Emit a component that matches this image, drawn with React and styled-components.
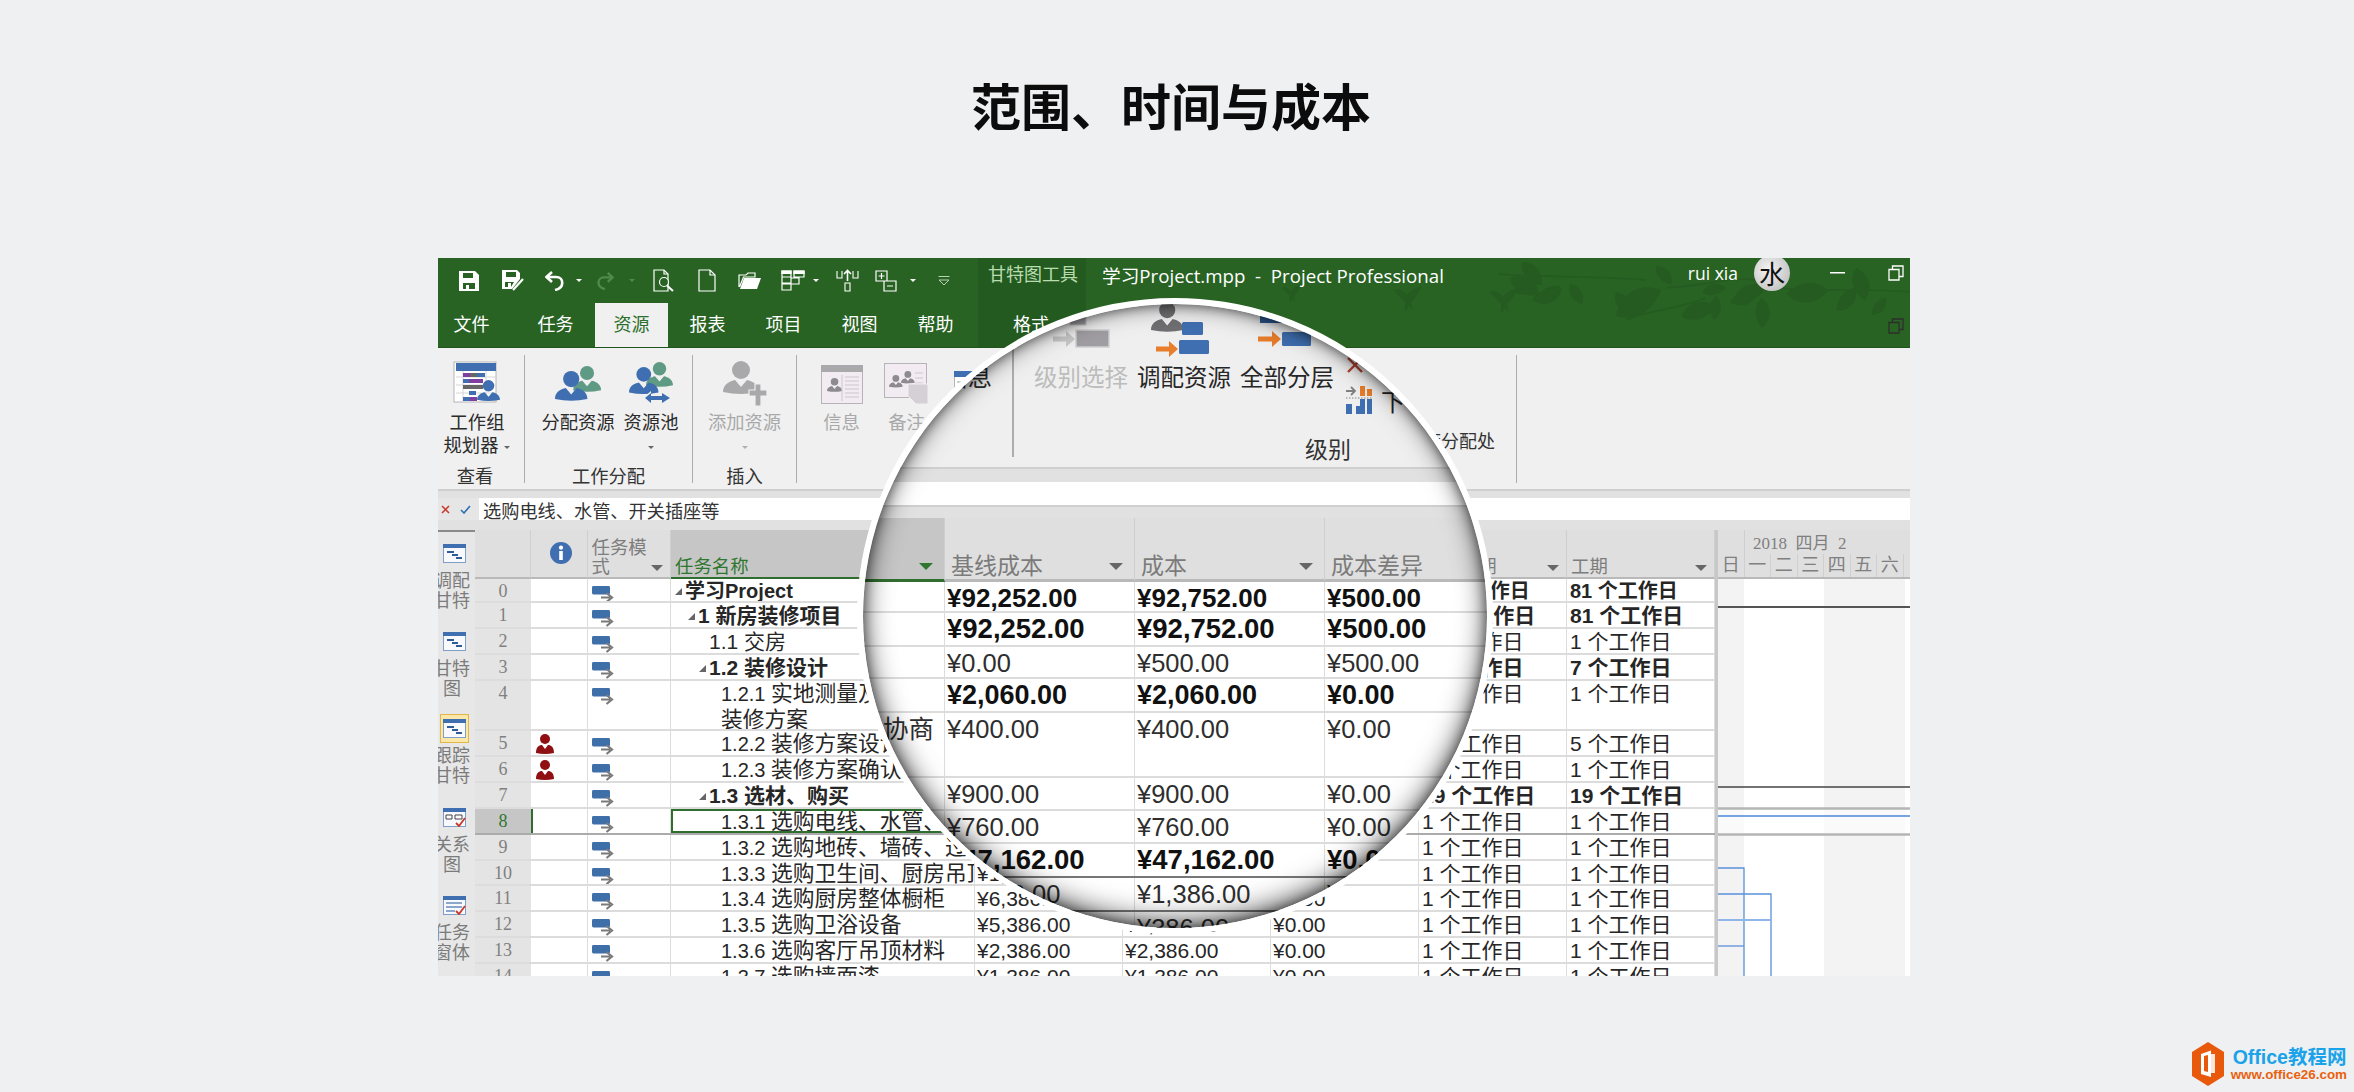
import React from "react";
import styled, { createGlobalStyle } from "styled-components";

const GREEN = "#286323";
const CJK = `"Liberation Sans", "Noto Sans CJK SC", sans-serif`;
const SERIF = `"Liberation Serif", "Noto Sans CJK SC", serif`;
const UI = `"Open Sans", "Noto Sans CJK SC", sans-serif`;
const COLS = "56px 56.5px 83.5px 304px 148px 148px 148px 148px 148px";

const Global = createGlobalStyle`
  html, body { margin: 0; padding: 0; background: #eff0f2; }
  * { box-sizing: border-box; }
`;

////PAGE
const Page = styled.div`
  position: relative;
  width: 2354px;
  height: 1092px;
  overflow: hidden;
  background: #eff0f2;
  font-family: ${CJK};
`;
const Title = styled.h1`
  margin: 0 0 50px;
  height: 208px;
  padding-right: 12px;
  line-height: 208px;
  text-align: center;
  font-family: "Noto Sans CJK SC", sans-serif;
  font-size: 50px;
  font-weight: 700;
  color: #0c0c0c;
`;
const Win = styled.div`
  position: relative;
  width: 1472px;
  height: 718px;
  margin-left: 438px;
  overflow: hidden;
  background: #fff;
`;

////TITLE BAR + TABS
const Head = styled.header`
  position: relative;
  display: grid;
  grid-template-columns: 540px 108px 1fr;
  height: 90px;
  background: ${GREEN};
  border-bottom: 1px solid #1f551c;
  overflow: hidden;
`;
const HeadArt = styled.svg`
  position: absolute;
  left: 648px;
  top: 0;
`;
const HeadCol = styled.div`
  position: relative;
  display: flex;
  flex-direction: column;
  background: ${(p) => (p.$dark ? "#235a1f" : "transparent")};
`;
const Qat = styled.div`
  display: flex;
  align-items: center;
  height: 45px;
  padding-left: 10px;
`;
const QatBtn = styled.div`
  display: flex;
  align-items: center;
  justify-content: center;
  width: ${(p) => p.$w}px;
  flex: none;
`;
const TabRow = styled.nav`
  display: flex;
  gap: 3px;
  height: 45px;
`;
const Tab = styled.div`
  width: ${(p) => (p.$file ? 78 : 73)}px;
  padding-right: ${(p) => (p.$file ? 11 : 0)}px;
  line-height: 44px;
  text-align: center;
  font-size: 18px;
  color: ${(p) => (p.$active ? "#2c6f2a" : "#fff")};
  background: ${(p) => (p.$active ? "#f0f0f0" : "transparent")};
`;
const ToolsTitle = styled.div`
  height: 45px;
  padding-left: 10px;
  line-height: 35px;
  font-size: 18px;
  color: #b9dcae;
`;
const FormatTab = styled.div`
  padding-left: 35px;
  line-height: 44px;
  font-size: 18px;
  color: #fff;
`;
const TitleRow = styled.div`
  position: relative;
  display: flex;
  align-items: flex-start;
  height: 45px;
  padding: 0 6px 0 16px;
  color: #fff;
  font-family: ${UI};
  font-size: 17.5px;
`;
const DocName = styled.div`
  font-size: 18.7px;
  line-height: 35px;
  white-space: pre;
`;
const UserName = styled.div`
  margin-left: auto;
  margin-right: 16px;
  line-height: 30px;
`;
const Avatar = styled.div`
  width: 36px;
  height: 36px;
  margin-top: -3px;
  border-radius: 50%;
  background: radial-gradient(circle at 40% 40%, #f4f4f4, #b4b4b4);
  color: #111;
  text-align: center;
  line-height: 36px;
  font-family: "Noto Sans CJK SC", sans-serif;
  font-size: 26px;
`;
const WinBtns = styled.div`
  display: flex;
  align-items: center;
  gap: 43px;
  height: 30px;
  margin-left: 40px;
`;
const RestoreDark = styled.div`
  position: absolute;
  right: 6px;
  top: 60px;
`;

////RIBBON
const Ribbon = styled.section`
  display: flex;
  height: 141px;
  padding-top: 7px;
  background: #f0f0f0;
`;
const Group = styled.div`
  display: flex;
  flex-direction: column;
  flex: none;
  width: ${(p) => p.$w}px;
  height: 128px;
  padding-top: 5px;
  border-right: 1.5px solid #adadad;
`;
const GroupTools = styled.div`
  display: flex;
  flex: 1;
  padding-left: ${(p) => p.$pl || 0}px;
  justify-content: ${(p) => (p.$center ? "center" : "flex-start")};
`;
const GroupLabel = styled.div`
  height: 20px;
  margin-bottom: -4px;
  padding-right: ${(p) => p.$pr || 0}px;
  line-height: 20px;
  text-align: center;
  font-size: 18.3px;
  color: #333;
`;
const Tool = styled.div`
  display: flex;
  flex-direction: column;
  align-items: center;
  width: ${(p) => p.$w}px;
  flex: none;
  font-size: 18.3px;
  line-height: 23px;
  color: ${(p) => (p.$dim ? "#a9a9a9" : "#2b2b2b")};
`;
const ToolIcon = styled.div`
  display: flex;
  align-items: center;
  justify-content: center;
  height: 48px;
  margin-bottom: 3px;
`;
const Drop = styled.span`
  display: inline-block;
  width: 0;
  height: 0;
  margin-left: ${(p) => p.$ml || 0}px;
  border-style: solid;
  border-width: ${(p) => p.$s || 4}px ${(p) => p.$s || 4}px 0;
  border-color: ${(p) => p.$c || "#666"} transparent transparent;
  vertical-align: middle;
`;
const NextOver = styled.div`
  margin: 71px 21px 0 auto;
  font-size: 18px;
  line-height: 23px;
  color: #333;
  white-space: nowrap;
`;
const Band = styled.div`
  height: ${(p) => p.$h}px;
  background: #e1e1e1;
  border-top: ${(p) => (p.$line ? "2px solid #cfcfcf" : "0")};
`;
const FormulaRow = styled.div`
  display: flex;
  height: 22px;
  background: #e6e6e6;
`;
const FormulaBtns = styled.div`
  display: flex;
  align-items: center;
  gap: 10px;
  width: 41px;
  padding-left: 3px;
`;
const FormulaText = styled.div`
  flex: 1;
  padding-left: 4px;
  background: #fff;
  font-size: 18.2px;
  line-height: 25px;
  color: #333;
  font-family: "Noto Sans CJK SC", sans-serif;
`;

////MAIN AREA
const Main = styled.main`
  display: flex;
  height: 446px;
  overflow: hidden;
`;
const ViewBar = styled.aside`
  flex: none;
  width: 37px;
  background: #e7e7e7;
  border-top: 2px solid #8a8a8a;
  overflow: hidden;
`;
const ViewItem = styled.div`
  display: flex;
  flex-direction: column;
  align-items: center;
  width: 36px;
  height: 88px;
  margin-left: -4px;
  padding-top: ${(p) => (p.$active ? 6 : 12)}px;
  font-size: 18px;
  line-height: 20px;
  color: #7b7b7b;
`;
const ViewIcon = styled.div`
  display: flex;
  align-items: center;
  justify-content: center;
  width: 29px;
  height: ${(p) => (p.$active ? 29 : 19)}px;
  margin-left: 4px;
  margin-bottom: ${(p) => (p.$active ? 3 : 8)}px;
  background: ${(p) => (p.$active ? "#fbe7a8" : "transparent")};
  border: ${(p) => (p.$active ? "1.5px solid #e2b64a" : "0")};
`;
const ViewLine = styled.div`
  white-space: nowrap;
`;
const Sheet = styled.div`
  flex: none;
  width: 1240px;
`;
const HeaderRow = styled.div`
  display: grid;
  grid-template-columns: ${COLS};
  height: 49px;
`;
const Th = styled.div`
  position: relative;
  display: flex;
  align-items: ${(p) => (p.$center ? "center" : "flex-end")};
  justify-content: ${(p) => (p.$center ? "center" : "flex-start")};
  padding: 0 0 2px 4px;
  background: ${(p) => (p.$sel ? "#c6c6c6" : "#dfdfdf")};
  border-right: 1px solid #cfcfcf;
  border-bottom: 2.5px solid ${(p) => (p.$sel ? "#2f6e2f" : "#b9b9b9")};
  color: ${(p) => (p.$sel ? "#2f772f" : "#7d7d7d")};
  font-family: "Noto Sans CJK SC", sans-serif;
  font-size: 18.4px;
  line-height: 19px;
  white-space: pre-line;
`;
const ThDrop = styled.span`
  position: absolute;
  right: 7px;
  bottom: 6px;
  line-height: 0;
`;
const Row = styled.div`
  display: grid;
  grid-template-columns: ${COLS};
  height: ${(p) => p.$h}px;
  overflow: hidden;
  border-bottom: ${(p) => (p.$sel ? "2.5px solid #ababab" : "2px solid #dcdcdc")};
  font-size: ${(p) => p.$fs}px;
  font-weight: ${(p) => (p.$bold ? 700 : 400)};
  color: #262626;
`;
const NumCell = styled.div`
  text-align: center;
  font-family: ${SERIF};
  font-size: 18px;
  font-weight: 400;
  line-height: 24px;
  color: ${(p) => (p.$sel ? "#2f772f" : "#808080")};
  background: ${(p) => (p.$sel ? "#c6c6c6" : "#e4e4e4")};
`;
const IconCell = styled.div`
  padding: ${(p) => p.$pt}px 0 0 ${(p) => p.$pl}px;
  border-right: 1.5px solid #dcdcdc;
  border-left: ${(p) => (p.$sel ? "2px solid #2f6e2f" : "0")};
  line-height: 0;
`;
const Cell = styled.div`
  padding-left: ${(p) => (p.$pl === undefined ? 2 : p.$pl)}px;
  border-right: 1.5px solid #dcdcdc;
  line-height: 25px;
  white-space: nowrap;
  overflow: hidden;
  outline: ${(p) => (p.$sel ? "2px solid #2f6e2f" : "0")};
  outline-offset: -2px;
`;
const TaskText = styled.span`
  font-size: 21.75px;
`;
const TaskNo = styled.span`
  font-size: 20px;
`;
const Fold = styled.span`
  display: inline-block;
  width: 0;
  height: 0;
  margin: 0 3px 3px -10px;
  border-style: solid;
  border-width: 0 0 7px 7px;
  border-color: transparent transparent #666;
`;
const Split = styled.div`
  flex: none;
  width: 3px;
  background: #c8c8c8;
`;
const Gantt = styled.div`
  flex: 1;
  min-width: 0;
  background: #fff;
`;
const GanttHead = styled.div`
  display: flex;
  flex-direction: column;
  height: 49px;
  background: #dfdfdf;
  border-bottom: 2.5px solid #b9b9b9;
  color: #808080;
  font-family: ${SERIF};
`;
const GanttTop = styled.div`
  height: 24px;
  margin-left: 26px;
  padding-left: 8px;
  border-left: 1px solid #cfcfcf;
  font-size: 17px;
  line-height: 28px;
  white-space: pre;
`;
const GanttDays = styled.div`
  display: flex;
  flex: 1;
`;
const Day = styled.div`
  width: 26.5px;
  flex: none;
  border-right: 1px solid #cfcfcf;
  text-align: center;
  font-size: 18px;
  line-height: 23px;
`;

////MAGNIFIER
const Lens = styled.div`
  position: absolute;
  left: 418.5px;
  top: 40px;
  width: 636px;
  height: 636px;
  border: 6px solid #fff;
  border-radius: 50%;
  background: #fff;
  overflow: hidden;
  &::after {
    content: "";
    position: absolute;
    inset: 0;
    border-radius: 50%;
    box-shadow: inset 0 -5px 28px rgba(0, 0, 0, 0.72), inset 0 0 12px rgba(0, 0, 0, 0.5);
  }
`;
const LensRibbon = styled.div`
  display: flex;
  height: 163px;
  background: #efefef;
`;
const LensPrev = styled.div`
  flex: none;
  width: 151.5px;
  height: 153px;
  padding: 62px 20px 0 0;
  border-right: 2px solid #adadad;
  text-align: right;
  font-size: 24px;
  line-height: 24px;
  color: #2b2b2b;
`;
const LensGroup = styled.div`
  padding-left: 20px;
`;
const LensTools = styled.div`
  display: flex;
  gap: 9px;
  height: 112px;
`;
const LensTool = styled.div`
  flex: none;
  width: 94px;
  font-size: 23.5px;
  line-height: 24px;
  white-space: nowrap;
  color: ${(p) => (p.$dim ? "#bcbcbc" : "#262626")};
`;
const LensIcon = styled.svg`
  display: block;
  width: 94px;
  height: 62px;
`;
const LensSmall = styled.div`
  display: flex;
  flex-direction: column;
  gap: 10px;
  margin-left: 3px;
  padding-top: 50px;
`;
const LensSmallRow = styled.div`
  display: flex;
  align-items: center;
  gap: ${(p) => p.$gap}px;
  height: ${(p) => p.$h}px;
  font-size: ${(p) => p.$fs}px;
  color: #222;
`;
const LensGroupLabel = styled.div`
  margin: 22px 0 0 271px;
  font-size: 23px;
  line-height: 24px;
  color: #333;
`;
const LensGap = styled.div`
  height: 23px;
  background: #fff;
`;
const LensHeader = styled.div`
  display: grid;
  grid-template-columns: 82.5px 190px 190px 190px;
  height: 64px;
`;
const LensTh = styled.div`
  position: relative;
  padding: 32px 0 0 6px;
  background: ${(p) => (p.$sel ? "#c6c6c6" : "#dfdfdf")};
  border-right: 1.5px solid #cfcfcf;
  border-bottom: 3px solid ${(p) => (p.$sel ? "#2f6e2f" : "#b9b9b9")};
  color: #7b7b7b;
  font-family: "Noto Sans CJK SC", sans-serif;
  font-size: 23px;
  line-height: 28px;
`;
const LensThDrop = styled.span`
  position: absolute;
  right: 11px;
  bottom: 9px;
  line-height: 0;
`;
const LensRow = styled.div`
  display: grid;
  grid-template-columns: 82.5px 190px 190px 190px;
  height: ${(p) => p.$h}px;
  border-bottom: 2px solid ${(p) => (p.$dark ? "#777" : "#dcdcdc")};
  font-size: ${(p) => p.$fs}px;
  font-weight: ${(p) => (p.$bold ? 700 : 400)};
  color: ${(p) => (p.$bold ? "#111" : "#2e2e2e")};
`;
const LensCell = styled.div`
  padding-left: ${(p) => (p.$name ? 0 : 2)}px;
  padding-right: ${(p) => (p.$name ? 10 : 0)}px;
  border-right: 1.5px solid #dcdcdc;
  line-height: 32px;
  text-align: ${(p) => (p.$name ? "right" : "left")};
  white-space: nowrap;
  overflow: ${(p) => (p.$name ? "visible" : "hidden")};
`;

////LOGO
const Logo = styled.div`
  position: absolute;
  right: 7px;
  bottom: 6px;
  display: flex;
  align-items: center;
  gap: 9px;
`;
const LogoText = styled.div`
  display: flex;
  flex-direction: column;
`;
const LogoMain = styled.div`
  font-size: 19.5px;
  font-weight: 700;
  line-height: 20px;
  color: #1aa3e8;
`;
const LogoUrl = styled.div`
  margin-left: -2px;
  font-size: 13.4px;
  font-weight: 700;
  line-height: 15px;
  color: #e8620f;
`;

////ICONS
const person = (x, y, s, fill, neck = "#f0f0f0") => (
  <g transform={`translate(${x} ${y}) scale(${s})`}>
    <circle cx="18" cy="9" r="9" fill={fill} />
    <path d="M0 31C0 23 7 20 12 19L18 26L24 19C29 20 36 23 36 31Q18 35 0 31Z" fill={fill} />
    <path d="M15 19.5L18 24L21 19.5Z" fill={neck} />
  </g>
);

const IconSave = () => (
  <svg width="20" height="20" viewBox="0 0 20 20">
    <path fillRule="evenodd" fill="#fff" d="M0 0H16L20 4V20H0ZM4 2V7H14V2ZM4 12V18H7V14H10V18H16V12Z" />
  </svg>
);
const IconSaveAs = () => (
  <svg width="22" height="21" viewBox="0 0 22 21">
    <path fillRule="evenodd" fill="#fff" d="M0 0H15L18 3V9L10 19H0ZM4 2V7H14V2ZM3 12V17H6V13H9V17L12 12Z" />
    <path d="M11 20L21 9" stroke="#fff" strokeWidth="2.2" />
  </svg>
);
const IconUndo = () => (
  <svg width="20" height="20" viewBox="0 0 20 20" fill="none" stroke="#fff" strokeWidth="2.6">
    <path d="M7 1L1.5 6L7 11" />
    <path d="M2 6H11C19 6 20 17 10 19" />
  </svg>
);
const IconRedo = () => (
  <svg width="18" height="18" viewBox="0 0 20 20" fill="none" stroke="#4f8a49" strokeWidth="2.6">
    <path d="M13 1L18.5 6L13 11" />
    <path d="M18 6H9C1 6 0 17 10 19" />
  </svg>
);
const IconPreview = () => (
  <svg width="22" height="23" viewBox="0 0 22 23" fill="none" stroke="#fff" strokeWidth="1.2">
    <path d="M1 1H11L15 5V22H1Z" />
    <path d="M11 1V5H15" />
    <circle cx="11" cy="13" r="4.5" fill={GREEN} />
    <path d="M14 16.5L20 22" strokeWidth="2" />
  </svg>
);
const IconNew = () => (
  <svg width="18" height="23" viewBox="0 0 18 23" fill="none" stroke="#fff" strokeWidth="1.2">
    <path d="M1 1H12L17 6V22H1Z" />
    <path d="M12 1V6H17" />
  </svg>
);
const IconOpen = () => (
  <svg width="24" height="18" viewBox="0 0 24 18">
    <path d="M2 17L6 6H23L19 17Z" fill="#fff" />
    <path d="M1 15V3H8L10 1H17V5H5.5L1.5 15" fill="none" stroke="#fff" strokeWidth="1.2" />
  </svg>
);
const IconGrid = () => (
  <svg width="24" height="21" viewBox="0 0 24 21" fill="none" stroke="#fff" strokeWidth="1.2">
    <path d="M1 1H10V7H1ZM13 1H23V7H13ZM1 7H10V13H1ZM10 8H18V14H10ZM1 14H10V20H1Z" />
    <path d="M1 1H10V3.5H1ZM13 1H23V3.5H13Z" fill="#fff" />
  </svg>
);
const IconMoveUp = () => (
  <svg width="23" height="23" viewBox="0 0 23 23" fill="none" stroke="#fff" strokeWidth="1.1">
    <path d="M1 2V9H6V2M17 2V9H22V2M9 14H14V22H9Z" />
    <path d="M11.5 12V2M8 5L11.5 1.5L15 5" strokeWidth="1.6" />
  </svg>
);
const IconPlusMinus = () => (
  <svg width="22" height="22" viewBox="0 0 22 22" fill="none" stroke="#fff" strokeWidth="1.2">
    <path d="M1 1H12V11H1ZM9 11H21V21H9Z" />
    <path d="M3.5 6H9.5M6.5 3V9M12 16H18" />
  </svg>
);
const IconCustomize = () => (
  <svg width="12" height="10" viewBox="0 0 12 10" fill="none" stroke="#b8d0b4" strokeWidth="1">
    <path d="M0.5 0.5H11.5M1 4L6 9L11 4Z" />
  </svg>
);
const IconMin = () => (
  <svg width="15" height="3" viewBox="0 0 15 3">
    <rect width="15" height="1.5" fill="#fff" />
  </svg>
);
const IconRestore = ({ c = "#fff" }) => (
  <svg width="16" height="16" viewBox="0 0 16 16" fill="none" stroke={c} strokeWidth="1.3">
    <path d="M1 4.5H11V15H1Z" />
    <path d="M4.5 4.5V1H15V11.5H11" />
  </svg>
);

const leaf = (x, y, l, r, k) => (
  <path
    key={k}
    transform={`translate(${x} ${y}) rotate(${r})`}
    d={`M0 0C${l * 0.3} ${-l * 0.36} ${l * 0.75} ${-l * 0.32} ${l} 0C${l * 0.7} ${l * 0.26} ${l * 0.25} ${l * 0.3} 0 0Z`}
    fill="#255b21"
  />
);
const bird = (x, y, s, k) => (
  <path
    key={k}
    transform={`translate(${x} ${y}) scale(${s})`}
    d="M0 2C6 0 10 3 13 7C16 3 20 0 28 -2C24 6 20 12 17 14L19 22L15 18L11 24L11 14C7 10 3 6 0 2Z"
    fill="#255b21"
  />
);
// x, y, length, rotation
const LEAVES = [
  [424, 20, 34, 30], [436, 4, 30, 50], [452, 22, 26, 150], [476, 30, 26, 160], [484, 26, 24, 60],
  [475, 34, 30, 165], [530, 58, 52, -30], [530, 34, 28, 60], [570, 8, 24, 50], [562, 34, 24, 110],
  [595, 58, 36, -15], [630, 38, 24, 95], [680, 30, 30, 170], [672, 34, 30, 160], [676, 40, 30, 90],
  [742, 32, 42, 175], [770, 10, 34, 75], [770, 30, 30, 130], [800, 40, 22, 130], [616, 34, 24, -10],
];

const PeopleA = () => (
  <svg width="46" height="37" viewBox="0 0 46 37">
    {person(18, 0, 0.78, "#5f9a84")}
    {person(0, 5, 0.9, "#3f6fb0")}
  </svg>
);
const PeopleB = () => (
  <svg width="48" height="44" viewBox="0 0 48 44">
    {person(19, 0, 0.75, "#5f9a84")}
    {person(2, 5, 0.82, "#3f6fb0")}
    <path d="M16 36L24 29V33H34V29L46 36L34 43V39H24V43Z" fill="#f0f0f0" />
    <path d="M18 36L24 31V34H35V31L43 36L35 41V38H24V41Z" fill="#3f6fb0" />
  </svg>
);
const PersonAdd = () => (
  <svg width="44" height="46" viewBox="0 0 44 46">
    {person(0, 0, 1, "#a9a8ab")}
    <path d="M26 29H32V23H38V29H44V35H38V45H32V35H26Z" fill="#a9a8ab" stroke="#f0f0f0" strokeWidth="1.2" />
  </svg>
);
const Planner = () => (
  <svg width="48" height="46" viewBox="0 0 48 46">
    <rect x="1" y="1" width="42" height="40" fill="#fff" stroke="#b5b5b5" />
    <rect x="3" y="2" width="40" height="8" fill="#3f6fb0" />
    {[16, 24, 32].map((y) => (
      <path key={y} d={`M3 ${y}H43`} stroke="#d5d5d5" />
    ))}
    <path d="M10 10V41M33 10V41" stroke="#d5d5d5" />
    <rect x="10" y="12" width="7" height="4" fill="#7e3fa0" />
    <rect x="17" y="12" width="7" height="4" fill="#666" />
    <rect x="24" y="12" width="8" height="4" fill="#3f6fb0" />
    <rect x="10" y="18" width="6" height="4" fill="#3f6fb0" />
    <rect x="16" y="18" width="14" height="4" fill="#7e3fa0" />
    <rect x="10" y="24" width="7" height="4" fill="#666" />
    <rect x="17" y="24" width="13" height="4" fill="#666" />
    <rect x="16" y="30" width="7" height="4" fill="#3f6fb0" />
    <rect x="10" y="36" width="7" height="4" fill="#3f6fb0" />
    <rect x="17" y="36" width="7" height="4" fill="#7e3fa0" />
    {person(24, 19, 0.64, "#3f6fb0")}
  </svg>
);
const InfoCard = () => (
  <svg width="42" height="39" viewBox="0 0 42 39">
    <rect x="0.5" y="0.5" width="41" height="38" fill="#f2ecf2" stroke="#b7b3b8" />
    <rect x="0" y="0" width="42" height="7" fill="#a9a8ab" />
    {person(6, 13, 0.42, "#8d8b8f")}
    <path d="M21 10V36" stroke="#c9c6ca" />
    {[12, 16, 20, 24, 28, 32].map((y) => (
      <path key={y} d={`M24 ${y}H38`} stroke="#c9c6ca" />
    ))}
  </svg>
);
const NoteCard = () => (
  <svg width="46" height="42" viewBox="0 0 46 42">
    <rect x="0.5" y="0.5" width="42" height="34" fill="#f2ecf2" stroke="#b7b3b8" />
    {person(5, 12, 0.38, "#8d8b8f")}
    {person(17, 8, 0.38, "#8d8b8f")}
    <path d="M31 10H39M31 15H39M31 20H39" stroke="#c9c6ca" />
    <path d="M24 21H44V41H32L24 33Z" fill="#d5d0d6" stroke="#f0f0f0" />
  </svg>
);
const TableCard = () => (
  <svg width="36" height="26" viewBox="0 0 36 26">
    <rect x="0.5" y="0.5" width="35" height="25" fill="#fff" stroke="#b5b5b5" />
    <rect width="36" height="6" fill="#3f6fb0" />
    <path d="M3 11H14M3 15H14M3 19H14" stroke="#999" />
  </svg>
);
const ViewGantt = ({ kind }) => (
  <svg width="23" height="19" viewBox="0 0 23 19">
    <rect x="0.5" y="0.5" width="22" height="18" fill="#f7f9fc" stroke="#7f9fc8" />
    <rect x="0" y="0" width="23" height="4" fill="#3f6fb0" />
    {kind === "net" ? (
      <path d="M3 7H9V11H3ZM12 7H19V11H12Z" fill="#fff" stroke="#444" />
    ) : kind === "form" ? (
      <path d="M3 7H19M3 11H19M3 15H12" stroke="#8aa6cc" strokeWidth="2" />
    ) : (
      <path d="M4 7H11V9H4ZM9 10H15V12H9ZM13 13H19V15H13Z" fill="#2f5c98" />
    )}
    {kind === "net" || kind === "form" ? (
      <path d="M13 15L16 18L22 10" fill="none" stroke="#c8392b" strokeWidth="1.8" />
    ) : null}
  </svg>
);
const InfoMark = () => (
  <svg width="22" height="22" viewBox="0 0 22 22">
    <circle cx="11" cy="11" r="11" fill="#3f6fb0" />
    <rect x="9.2" y="9" width="3.6" height="9" fill="#fff" />
    <circle cx="11" cy="5.7" r="2.1" fill="#fff" />
  </svg>
);
const ModeIcon = () => (
  <svg width="22" height="17" viewBox="0 0 22 17">
    <rect width="18" height="8.5" rx="1.4" fill="#3f6fa8" />
    <path d="M9 11.5H18M14.5 7L20 11.5L14.5 16" fill="none" stroke="#7a7a7a" strokeWidth="2.2" />
  </svg>
);
const PersonRed = () => (
  <svg width="18" height="20" viewBox="0 0 18 20">
    <circle cx="9" cy="5" r="5" fill="#8f0f12" />
    <path d="M0 19C0 13 3 11 6 11L9 15L12 11C15 11 18 13 18 19Q9 21 0 19Z" fill="#8f0f12" />
  </svg>
);
const lensArrow = (x, y, w, c) => (
  <path
    d={`M${x} ${y - 2.5}H${x + w - 9}V${y - 8}L${x + w} ${y}L${x + w - 9} ${y + 8}V${y + 2.5}H${x}Z`}
    fill={c}
  />
);
const LevelSelect = () => (
  <LensIcon viewBox="0 0 94 62">
    <rect x="36" y="12" width="16" height="9" fill="#a19ea3" stroke="#ccc" />
    {lensArrow(19, 35, 22, "#c8c8c8")}
    <rect x="42" y="26" width="33" height="17" fill="#a19ea3" stroke="#cfcfcf" strokeWidth="1.5" />
  </LensIcon>
);
const LevelResource = () => (
  <LensIcon viewBox="0 0 94 62">
    {person(14, -2, 0.9, "#6f6f72", "#efefef")}
    <rect x="45" y="18" width="21" height="13" rx="1.5" fill="#3f6fb0" />
    {lensArrow(19, 45, 22, "#e87d2b")}
    <rect x="42" y="36" width="30" height="14" rx="1.5" fill="#3f6fb0" />
  </LensIcon>
);
const LevelAll = () => (
  <LensIcon viewBox="0 0 94 62">
    <rect x="20" y="10" width="22" height="9" fill="#2f5c98" />
    {lensArrow(18, 35, 23, "#e87d2b")}
    <rect x="42" y="28" width="29" height="14" rx="1.5" fill="#3f6fb0" />
  </LensIcon>
);

const rows = [
  { h: 24, fs: 20, bold: 1, ind: 14, fold: 1, name: "学习Project", b: "¥92,252.00", c: "¥92,752.00", d: "¥500.00", t1: "81 个工作日", t2: "81 个工作日" },
  { h: 26, fs: 21, bold: 1, ind: 27, fold: 1, name: "1 新房装修项目", b: "¥92,252.00", c: "¥92,752.00", d: "¥500.00", t1: "81 个工作日", t2: "81 个工作日" },
  { h: 26, fs: 21, ind: 38, name: "1.1 交房", b: "¥0.00", c: "¥500.00", d: "¥500.00", t1: "1 个工作日", t2: "1 个工作日" },
  { h: 26, fs: 21, bold: 1, ind: 38, fold: 1, name: "1.2 装修设计", b: "¥2,060.00", c: "¥2,060.00", d: "¥0.00", t1: "7 个工作日", t2: "7 个工作日" },
  { h: 50, fs: 21, ind: 50, no: "1.2.1 ", name: "实地测量及确定", name2: "装修方案", b: "¥400.00", c: "¥400.00", d: "¥0.00", t1: "1 个工作日", t2: "1 个工作日" },
  { h: 26, fs: 21, ind: 50, res: 1, no: "1.2.2 ", name: "装修方案设计并协商", b: "¥1,000.00", c: "¥1,000.00", d: "¥0.00", t1: "5 个工作日", t2: "5 个工作日" },
  { h: 26, fs: 21, ind: 50, res: 1, no: "1.2.3 ", name: "装修方案确认", b: "¥660.00", c: "¥660.00", d: "¥0.00", t1: "1 个工作日", t2: "1 个工作日" },
  { h: 26, fs: 21, bold: 1, ind: 38, fold: 1, name: "1.3 选材、购买", b: "¥47,162.00", c: "¥47,162.00", d: "¥0.00", t1: "19 个工作日", t2: "19 个工作日" },
  { h: 26, fs: 21, ind: 50, sel: 1, no: "1.3.1 ", name: "选购电线、水管、开关插座等", b: "¥900.00", c: "¥900.00", d: "¥0.00", t1: "1 个工作日", t2: "1 个工作日" },
  { h: 26, fs: 21, ind: 50, no: "1.3.2 ", name: "选购地砖、墙砖、过门石等", b: "¥760.00", c: "¥760.00", d: "¥0.00", t1: "1 个工作日", t2: "1 个工作日" },
  { h: 25, fs: 21, ind: 50, no: "1.3.3 ", name: "选购卫生间、厨房吊顶", b: "¥1,162.00", c: "¥1,162.00", d: "¥0.00", t1: "1 个工作日", t2: "1 个工作日" },
  { h: 26, fs: 21, ind: 50, no: "1.3.4 ", name: "选购厨房整体橱柜", b: "¥6,386.00", c: "¥6,386.00", d: "¥0.00", t1: "1 个工作日", t2: "1 个工作日" },
  { h: 26, fs: 21, ind: 50, no: "1.3.5 ", name: "选购卫浴设备", b: "¥5,386.00", c: "¥5,386.00", d: "¥0.00", t1: "1 个工作日", t2: "1 个工作日" },
  { h: 26, fs: 21, ind: 50, no: "1.3.6 ", name: "选购客厅吊顶材料", b: "¥2,386.00", c: "¥2,386.00", d: "¥0.00", t1: "1 个工作日", t2: "1 个工作日" },
  { h: 26, fs: 21, ind: 50, no: "1.3.7 ", name: "选购墙面漆", b: "¥1,386.00", c: "¥1,386.00", d: "¥0.00", t1: "1 个工作日", t2: "1 个工作日" },
];

const lensRows = [
  { h: 31, fs: 26, bold: 1, b: "¥92,252.00", c: "¥92,752.00", d: "¥500.00" },
  { h: 34, fs: 27.5, bold: 1, b: "¥92,252.00", c: "¥92,752.00", d: "¥500.00" },
  { h: 32, fs: 25.5, b: "¥0.00", c: "¥500.00", d: "¥500.00" },
  { h: 34, fs: 27, bold: 1, b: "¥2,060.00", c: "¥2,060.00", d: "¥0.00" },
  { h: 65, fs: 25.5, n: "协商", b: "¥400.00", c: "¥400.00", d: "¥0.00" },
  { h: 33, fs: 25.5, b: "¥900.00", c: "¥900.00", d: "¥0.00" },
  { h: 33, fs: 25.5, b: "¥760.00", c: "¥760.00", d: "¥0.00" },
  { h: 34, fs: 27.5, bold: 1, dark: 1, b: "¥47,162.00", c: "¥47,162.00", d: "¥0.00" },
  { h: 34, fs: 25.5, dark: 1, b: "¥1,386.00", c: "¥1,386.00", d: "¥0.00" },
  { h: 34, fs: 25.5, b: "¥386.00", c: "¥386.00", d: "¥0.00" },
];

const views = [
  { kind: "gantt", lines: ["调配", "甘特"] },
  { kind: "gantt", lines: ["甘特", "图"] },
  { kind: "gantt", active: 1, lines: ["跟踪", "甘特"] },
  { kind: "net", lines: ["关系", "图"] },
  { kind: "form", lines: ["任务", "窗体"] },
];

const tabs = ["任务", "资源", "报表", "项目", "视图", "帮助"];

const GanttChart = () => (
  <svg width="192" height="397" viewBox="0 0 192 397" style={{ display: "block" }}>
    <rect x="0" width="26" height="397" fill="#f3f3f3" />
    <rect x="106" width="81" height="397" fill="#f3f3f3" />
    <rect y="229" width="192" height="27" fill="#fff" fillOpacity="0.6" />
    <path d="M0 28H192" stroke="#555" strokeWidth="2" />
    <path d="M0 208H192" stroke="#444" strokeWidth="1.6" />
    <path d="M0 229.5H192M0 255.5H192" stroke="#b5b5b5" strokeWidth="2.4" />
    <path d="M0 237H192" stroke="#4a86d8" strokeWidth="1.3" />
    <g fill="none" stroke="#5b90dc" strokeWidth="1.3">
      <path d="M0 289H26V397" />
      <path d="M0 315H53V397" />
      <path d="M0 367H26" />
    </g>
    <path d="M0 341H53" stroke="#8fb5ea" strokeWidth="2" />
  </svg>
);

const App = () => {
  return (
    <Page>
      <Global />
      <Title>范围、时间与成本</Title>

      <Win>
        {/* title bar and tabs */}
        <Head>
          <HeadArt width="824" height="90" viewBox="0 0 824 90">
            <path d="M412 16C470 20 520 18 560 22M580 30C640 26 660 12 690 30C740 34 780 30 824 34M540 62C570 50 590 52 620 40" fill="none" stroke="#255b21" strokeWidth="1.6" />
            {LEAVES.map((l, i) => leaf(l[0], l[1], l[2], l[3], i))}
            {bird(196, 28, 0.7, "a")}
            {bird(308, 30, 1, "b")}
            {bird(404, 32, 1, "c")}
          </HeadArt>
          <HeadCol>
            <Qat>
              <QatBtn $w={42}><IconSave /></QatBtn>
              <QatBtn $w={46}><IconSaveAs /></QatBtn>
              <QatBtn $w={38}><IconUndo /></QatBtn>
              <QatBtn $w={10}><Drop $c="#fff" $s={3} /></QatBtn>
              <QatBtn $w={42}><IconRedo /></QatBtn>
              <QatBtn $w={12}><Drop $c="#4f8a49" $s={3} /></QatBtn>
              <QatBtn $w={52}><IconPreview /></QatBtn>
              <QatBtn $w={34}><IconNew /></QatBtn>
              <QatBtn $w={52}><IconOpen /></QatBtn>
              <QatBtn $w={34}><IconGrid /></QatBtn>
              <QatBtn $w={12}><Drop $c="#fff" $s={3} /></QatBtn>
              <QatBtn $w={50}><IconMoveUp /></QatBtn>
              <QatBtn $w={28}><IconPlusMinus /></QatBtn>
              <QatBtn $w={26}><Drop $c="#fff" $s={3} /></QatBtn>
              <QatBtn $w={36}><IconCustomize /></QatBtn>
            </Qat>
            <TabRow>
              <Tab $file>文件</Tab>
              {tabs.map((t) => (
                <Tab key={t} $active={t === "资源"}>{t}</Tab>
              ))}
            </TabRow>
          </HeadCol>
          <HeadCol $dark>
            <ToolsTitle>甘特图工具</ToolsTitle>
            <FormatTab>格式</FormatTab>
          </HeadCol>
          <HeadCol>
            <TitleRow>
              <DocName>学习Project.mpp  -  Project Professional</DocName>
              <UserName>rui xia</UserName>
              <Avatar>水</Avatar>
              <WinBtns>
                <IconMin />
                <IconRestore />
              </WinBtns>
            </TitleRow>
            <RestoreDark><IconRestore c="#2e2e2e" /></RestoreDark>
          </HeadCol>
        </Head>

        {/* ribbon */}
        <Ribbon>
          <Group $w={87}>
            <GroupTools>
              <Tool $w={78}>
                <ToolIcon><Planner /></ToolIcon>
                <div>工作组</div>
                <div>规划器<Drop $ml={6} $s={3} /></div>
              </Tool>
            </GroupTools>
            <GroupLabel $pr={12}>查看</GroupLabel>
          </Group>
          <Group $w={168}>
            <GroupTools $pl={16}>
              <Tool $w={74}>
                <ToolIcon><PeopleA /></ToolIcon>
                <div>分配资源</div>
              </Tool>
              <Tool $w={72}>
                <ToolIcon><PeopleB /></ToolIcon>
                <div>资源池</div>
                <div><Drop $s={3.5} /></div>
              </Tool>
            </GroupTools>
            <GroupLabel>工作分配</GroupLabel>
          </Group>
          <Group $w={104}>
            <GroupTools $center>
              <Tool $w={80} $dim>
                <ToolIcon><PersonAdd /></ToolIcon>
                <div>添加资源</div>
                <div><Drop $s={3.5} $c="#b0b0b0" /></div>
              </Tool>
            </GroupTools>
            <GroupLabel>插入</GroupLabel>
          </Group>
          <Group $w={720}>
            <GroupTools $pl={12}>
              <Tool $w={65} $dim>
                <ToolIcon><InfoCard /></ToolIcon>
                <div>信息</div>
              </Tool>
              <Tool $w={65} $dim>
                <ToolIcon><NoteCard /></ToolIcon>
                <div>备注</div>
              </Tool>
              <Tool $w={65}>
                <ToolIcon><TableCard /></ToolIcon>
              </Tool>
              <NextOver>下一个过度分配处</NextOver>
            </GroupTools>
          </Group>
        </Ribbon>

        {/* formula bar */}
        <Band $h={9} $line />
        <FormulaRow>
          <FormulaBtns>
            <svg width="9" height="9" viewBox="0 0 9 9">
              <path d="M1 1L8 8M8 1L1 8" stroke="#c8392b" strokeWidth="1.5" />
            </svg>
            <svg width="11" height="9" viewBox="0 0 11 9">
              <path d="M1 5L4 8L10 1" fill="none" stroke="#2f6fb0" strokeWidth="1.6" />
            </svg>
          </FormulaBtns>
          <FormulaText>选购电线、水管、开关插座等</FormulaText>
        </FormulaRow>
        <Band $h={10} />

        {/* table and gantt */}
        <Main>
          <ViewBar>
            {views.map((v, i) => (
              <ViewItem key={i} $active={v.active}>
                <ViewIcon $active={v.active}><ViewGantt kind={v.kind} /></ViewIcon>
                {v.lines.map((l) => (
                  <ViewLine key={l}>{l}</ViewLine>
                ))}
              </ViewItem>
            ))}
          </ViewBar>

          <Sheet>
            <HeaderRow>
              <Th />
              <Th $center><InfoMark /></Th>
              <Th>{"任务模\n式"}<ThDrop><Drop $s={6} /></ThDrop></Th>
              <Th $sel>任务名称</Th>
              <Th>基线成本<ThDrop><Drop $s={6} /></ThDrop></Th>
              <Th>成本<ThDrop><Drop $s={6} /></ThDrop></Th>
              <Th>成本差异<ThDrop><Drop $s={6} /></ThDrop></Th>
              <Th>基线工期<ThDrop><Drop $s={6} /></ThDrop></Th>
              <Th>工期<ThDrop><Drop $s={6} /></ThDrop></Th>
            </HeaderRow>
            {rows.map((r, i) => (
              <Row key={i} $h={r.h} $fs={r.fs} $bold={r.bold} $sel={r.sel}>
                <NumCell $sel={r.sel}>{i}</NumCell>
                <IconCell $pt={3} $pl={5} $sel={r.sel}>{r.res ? <PersonRed /> : null}</IconCell>
                <IconCell $pt={7} $pl={4}><ModeIcon /></IconCell>
                <Cell $pl={r.ind} $sel={r.sel}>
                  {r.fold ? <Fold /> : null}
                  {r.no ? (
                    <>
                      <TaskNo>{r.no}</TaskNo>
                      <TaskText>{r.name}</TaskText>
                    </>
                  ) : (
                    r.name
                  )}
                  {r.name2 ? <><br /><TaskText>{r.name2}</TaskText></> : null}
                </Cell>
                <Cell>{r.b}</Cell>
                <Cell>{r.c}</Cell>
                <Cell>{r.d}</Cell>
                <Cell $pl={3}>{r.t1}</Cell>
                <Cell $pl={3}>{r.t2}</Cell>
              </Row>
            ))}
          </Sheet>

          <Split />

          <Gantt>
            <GanttHead>
              <GanttTop>2018  四月  2</GanttTop>
              <GanttDays>
                {["日", "一", "二", "三", "四", "五", "六"].map((d) => (
                  <Day key={d}>{d}</Day>
                ))}
              </GanttDays>
            </GanttHead>
            <GanttChart />
          </Gantt>
        </Main>

        {/* magnifier over the window */}
        <Lens>
          <LensRibbon>
            <LensPrev>信息</LensPrev>
            <LensGroup>
              <LensTools>
                <LensTool $dim><LevelSelect />级别选择</LensTool>
                <LensTool><LevelResource />调配资源</LensTool>
                <LensTool><LevelAll />全部分层</LensTool>
                <LensSmall>
                  <LensSmallRow $gap={5} $h={22} $fs={18}>
                    <svg width="18" height="18" viewBox="0 0 18 18">
                      <path d="M2 2L16 16M16 2L2 16" stroke="#b5402f" strokeWidth="2.4" />
                    </svg>
                    项
                  </LensSmallRow>
                  <LensSmallRow $gap={9} $h={28} $fs={24}>
                    <svg width="26" height="28" viewBox="0 0 26 28">
                      <path d="M0 5H8M5 1L9 5L5 9" fill="none" stroke="#808080" strokeWidth="1.8" />
                      <rect x="14" y="0" width="5" height="10" fill="#e87d2b" />
                      <rect x="21" y="3" width="5" height="7" fill="#e87d2b" />
                      <path d="M0 12H26" stroke="#888" strokeDasharray="1.5 1.5" />
                      <rect x="0" y="18" width="6" height="10" fill="#3f6fb0" />
                      <rect x="10" y="20" width="5" height="8" fill="#3f6fb0" />
                      <rect x="14" y="13" width="5" height="15" fill="#3f6fb0" />
                      <rect x="21" y="13" width="5" height="15" fill="#3f6fb0" />
                    </svg>
                    下
                  </LensSmallRow>
                </LensSmall>
              </LensTools>
              <LensGroupLabel>级别</LensGroupLabel>
            </LensGroup>
          </LensRibbon>
          <Band $h={15} $line />
          <LensGap />
          <Band $h={13} $line />
          <LensHeader>
            <LensTh $sel><LensThDrop><Drop $s={7} $c="#2f772f" /></LensThDrop></LensTh>
            <LensTh>基线成本<LensThDrop><Drop $s={7} /></LensThDrop></LensTh>
            <LensTh>成本<LensThDrop><Drop $s={7} /></LensThDrop></LensTh>
            <LensTh>成本差异</LensTh>
          </LensHeader>
          {lensRows.map((r, i) => (
            <LensRow key={i} $h={r.h} $fs={r.fs} $bold={r.bold} $dark={r.dark}>
              <LensCell $name>{r.n}</LensCell>
              <LensCell>{r.b}</LensCell>
              <LensCell>{r.c}</LensCell>
              <LensCell>{r.d}</LensCell>
            </LensRow>
          ))}
        </Lens>
      </Win>

      <Logo>
        <svg width="32" height="44" viewBox="0 0 32 44">
          <path d="M16 0L32 10V34L16 44L0 34V10Z" fill="#e8590c" />
          <path d="M9 12L19 8.5V35L9 32ZM12 14V29L16 30V13Z" fill="#fff" fillRule="evenodd" />
          <path d="M19 12H23V31H19" fill="#fff" opacity="0.85" />
        </svg>
        <LogoText>
          <LogoMain>Office教程网</LogoMain>
          <LogoUrl>www.office26.com</LogoUrl>
        </LogoText>
      </Logo>
    </Page>
  );
};

export default App;
